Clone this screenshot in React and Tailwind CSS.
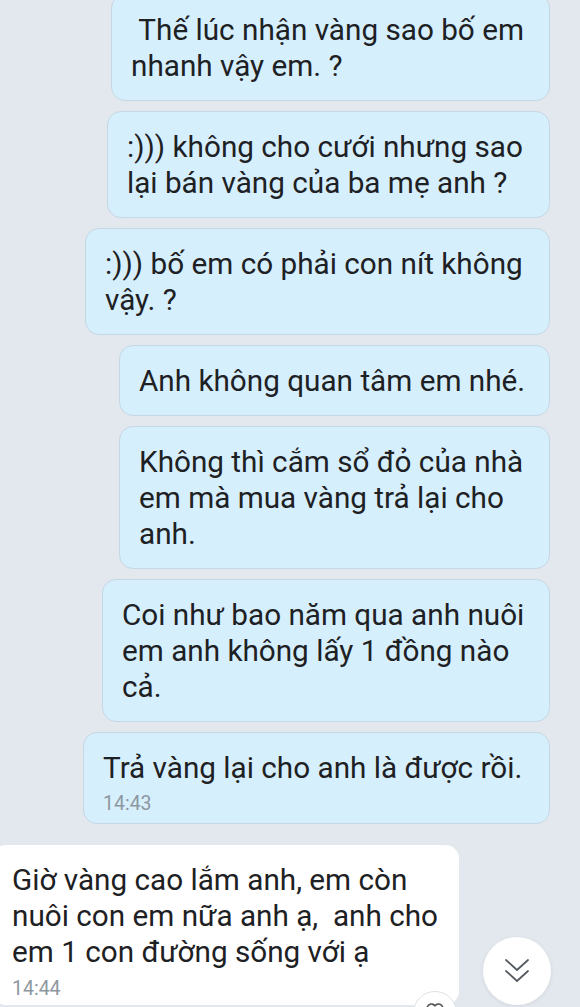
import React from 'react';

const sent = [
  { w: 'w-[439px]', lines: ['\u00a0Thế lúc nhận vàng sao bố em', 'nhanh vậy em. ?'], first: true },
  { w: 'w-[443px]', lines: [':))) không cho cưới nhưng sao', 'lại bán vàng của ba mẹ anh ?'] },
  { w: 'w-[465px]', lines: [':))) bố em có phải con nít không', 'vậy. ?'] },
  { w: 'w-[431px]', lines: ['Anh không quan tâm em nhé.'] },
  { w: 'w-[431px]', lines: ['Không thì cắm sổ đỏ của nhà', 'em mà mua vàng trả lại cho', 'anh.'] },
  { w: 'w-[448px]', lines: ['Coi như bao năm qua anh nuôi', 'em anh không lấy 1 đồng nào', 'cả.'] },
  { w: 'w-[467px]', lines: ['Trả vàng lại cho anh là được rồi.'], time: '14:43' },
];

const SentBubble = ({ w, lines, time, first }) => (
  <div
    className={`${w} ${first ? '-mt-[6px]' : ''} self-end rounded-[14px] border border-[#c5d7e3] bg-[#d6effd] pl-[19px] pr-3 pt-[17px] ${time ? 'pb-[7px]' : 'pb-[16px]'}`}
  >
    {lines.map((l, i) => (
      <div key={i} className="whitespace-pre text-[29.7px] leading-[36px] text-[#1e2124]">
        {l}
      </div>
    ))}
    {time && <div className="mt-[6px] text-[19.5px] leading-[24px] text-[#8d979f]">{time}</div>}
  </div>
);

const App = () => {
  return (
    <div
      className="relative h-[1007px] w-[580px] overflow-hidden bg-[#e3e8ef]"
      style={{ fontFamily: 'Roboto, "Noto Sans", "Liberation Sans", sans-serif' }}
    >
      <div className="flex flex-col gap-[10px] pr-[30px]">
        {sent.map((m, i) => (
          <SentBubble key={i} {...m} />
        ))}

        <div className="relative mt-[11px] -ml-[8px] w-[467px] rounded-[14px] bg-white pl-[20px] pr-3 pt-[17px] pb-[4px]">
          {['Giờ vàng cao lắm anh, em còn', 'nuôi con em nữa anh ạ,  anh cho', 'em 1 con đường sống với ạ'].map((l, i) => (
            <div key={i} className="whitespace-pre text-[29.7px] leading-[36px] text-[#1e2124]">
              {l}
            </div>
          ))}
          <div className="mt-[7px] text-[19.5px] leading-[24px] text-[#8d979f]">14:44</div>

          <div className="absolute right-[2px] top-[146px] flex h-[44px] w-[44px] justify-center rounded-full border border-[#dde2e7] bg-white pt-[10px]">
            <svg width="20" height="18" viewBox="0 0 24 22" fill="none" stroke="#555" strokeWidth="2">
              <path d="M12 20 L3.5 11.5 A5 5 0 0 1 12 4.5 A5 5 0 0 1 20.5 11.5 Z" />
            </svg>
          </div>
        </div>
      </div>

      <div className="absolute left-[483px] top-[937px] flex h-[68px] w-[68px] items-center justify-center rounded-full bg-white shadow-[0_1px_4px_rgba(0,0,0,0.08)]">
        <svg width="26" height="26" viewBox="0 0 26 26" fill="none" stroke="#555b61" strokeWidth="1.8" strokeLinecap="round" strokeLinejoin="round">
          <path d="M2 2 L13 12 L24 2" />
          <path d="M2 13 L13 23 L24 13" />
        </svg>
      </div>
    </div>
  );
};

export default App;
